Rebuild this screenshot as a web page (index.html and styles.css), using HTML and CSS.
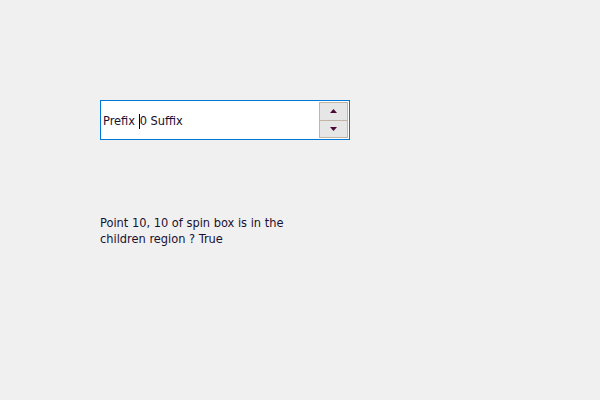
FILE: index.html
```html
<!DOCTYPE html>
<html>
<head>
<meta charset="utf-8">
<link rel="stylesheet" href="styles.css">
</head>
<body>
<div class="page">
  <div class="spin">
    <div class="field"><span>Prefix </span><span class="caret"></span><span>0 Suffix</span></div>
    <div class="buttons">
      <div class="btn up"><svg width="7" height="4" viewBox="0 0 7 4"><polygon points="3.5,0 7,4 0,4" fill="#4a0a33"/></svg></div>
      <div class="btn down"><svg width="7" height="4" viewBox="0 0 7 4"><polygon points="0,0 7,0 3.5,4" fill="#4a0a33"/></svg></div>
    </div>
  </div>
  <p class="label">Point 10, 10 of spin box is in the<br>children region ? True</p>
</div>
</body>
</html>
```
FILE: styles.css
```css
html, body {
  margin: 0;
  padding: 0;
  background: #f0f0f0;
  width: 600px;
  height: 400px;
  overflow: hidden;
}
.page {
  padding: 100px 0 0 100px;
  font-family: "DejaVu Sans Condensed", "DejaVu Sans", sans-serif;
  font-size: 12.7px;
  color: #1a1030;
}
.spin {
  box-sizing: border-box;
  width: 250px;
  height: 40px;
  border: 1px solid #0078d7;
  background: #fff;
  display: flex;
  align-items: center;
  padding: 1px 1px 1px 2px;
}
.field {
  flex: 1;
  display: flex;
  align-items: center;
  white-space: pre;
  line-height: 16px;
  padding-top: 2px;
}
.caret {
  display: inline-block;
  width: 1px;
  height: 15px;
  background: #000;
}
.buttons {
  display: flex;
  flex-direction: column;
  width: 29px;
  height: 36px;
  align-self: center;
}
.btn {
  box-sizing: border-box;
  flex: 1;
  background: #e6e6e6;
  border: 1px solid #c3b5a4;
  display: flex;
  align-items: center;
  justify-content: center;
}
.btn.down {
  border-top: none;
}
.label {
  margin: 75px 0 0 0;
  line-height: 16px;
}
```
